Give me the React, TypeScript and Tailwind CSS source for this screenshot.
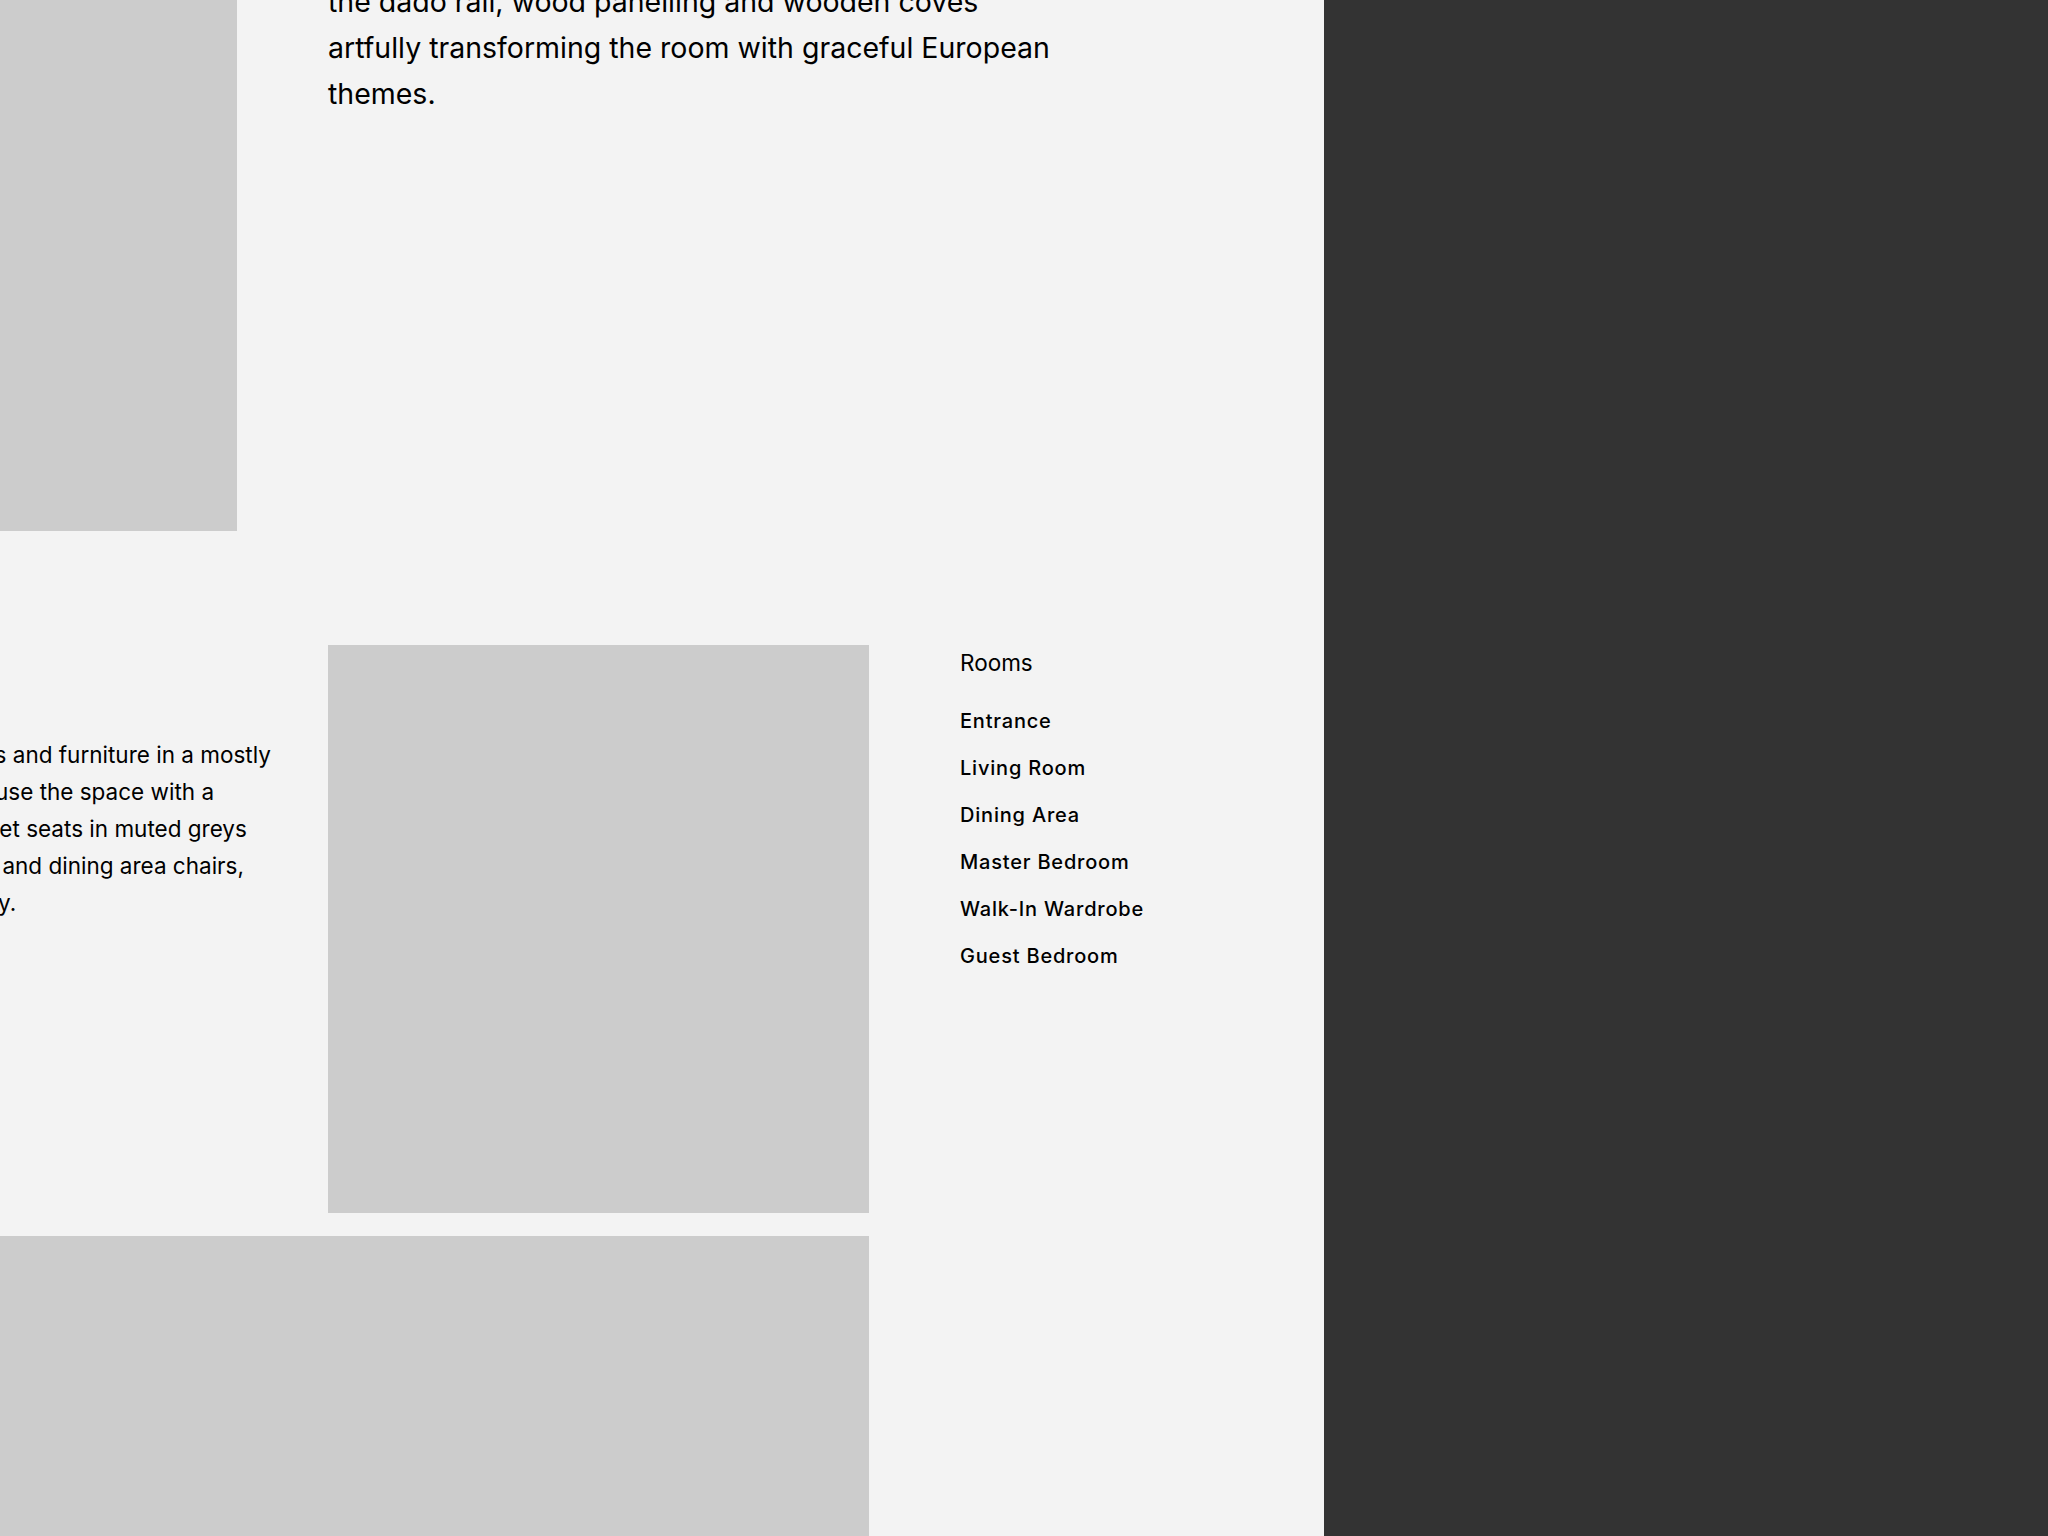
const ROOMS = [
  "Entrance",
  "Living Room",
  "Dining Area",
  "Master Bedroom",
  "Walk-In Wardrobe",
  "Guest Bedroom",
];

function Placeholder({ className }: { className: string }) {
  return <div className={`bg-[#cccccc] ${className}`} />;
}

function RoomsNav() {
  return (
    <nav className="flex flex-col pl-[91px]">
      <h3 className="text-[22.5px] leading-[36px] font-normal text-black">Rooms</h3>
      <ul className="mt-[16px] flex flex-col">
        {ROOMS.map((room) => (
          <li
            key={room}
            className="h-[47px] flex items-center text-[20px] font-medium tracking-[0.04em] text-black"
          >
            {room}
          </li>
        ))}
      </ul>
    </nav>
  );
}

export default function App() {
  return (
    <div
      className="flex w-full h-screen overflow-hidden"
      style={{ fontFamily: "Inter, 'Noto Sans', sans-serif" }}
    >
      <main className="w-[1324px] shrink-0 h-full bg-[#f3f3f3] overflow-hidden">
        <div className="ml-[-263px] mt-[-112px] flex flex-col">
          {/* intro */}
          <section className="flex items-start">
            <Placeholder className="w-[500px] h-[643px] shrink-0" />
            <p className="ml-[91px] -mt-[1px] text-[28.5px] leading-[46px] text-black whitespace-nowrap">
              Classic detailing is woven throughout, with
              <br />
              restored cornices, picture frames beneath
              <br />
              the dado rail, wood panelling and wooden coves
              <br />
              artfully transforming the room with graceful European
              <br />
              themes.
            </p>
          </section>

          {/* living spaces */}
          <section className="mt-[114px] flex items-start">
            <div className="w-[500px] shrink-0 pt-[91px] pl-[86px]">
              <p className="text-[22.5px] leading-[37px] text-black whitespace-nowrap">
                Plush furnishings and furniture in a mostly
                <br />
                neutral tones house the space with a
                <br />
                pure luxury: velvet seats in muted greys
                <br />
                in its living room and dining area chairs,
                <br />
                each respectively.
              </p>
            </div>
            <Placeholder className="ml-[91px] w-[541px] h-[568px] shrink-0" />
            <RoomsNav />
          </section>

          {/* gallery */}
          <section className="mt-[23px] flex">
            <Placeholder className="w-[1132px] h-[420px] shrink-0" />
          </section>
        </div>
      </main>
      <aside className="flex-1 h-full bg-[#333333]" />
    </div>
  );
}
